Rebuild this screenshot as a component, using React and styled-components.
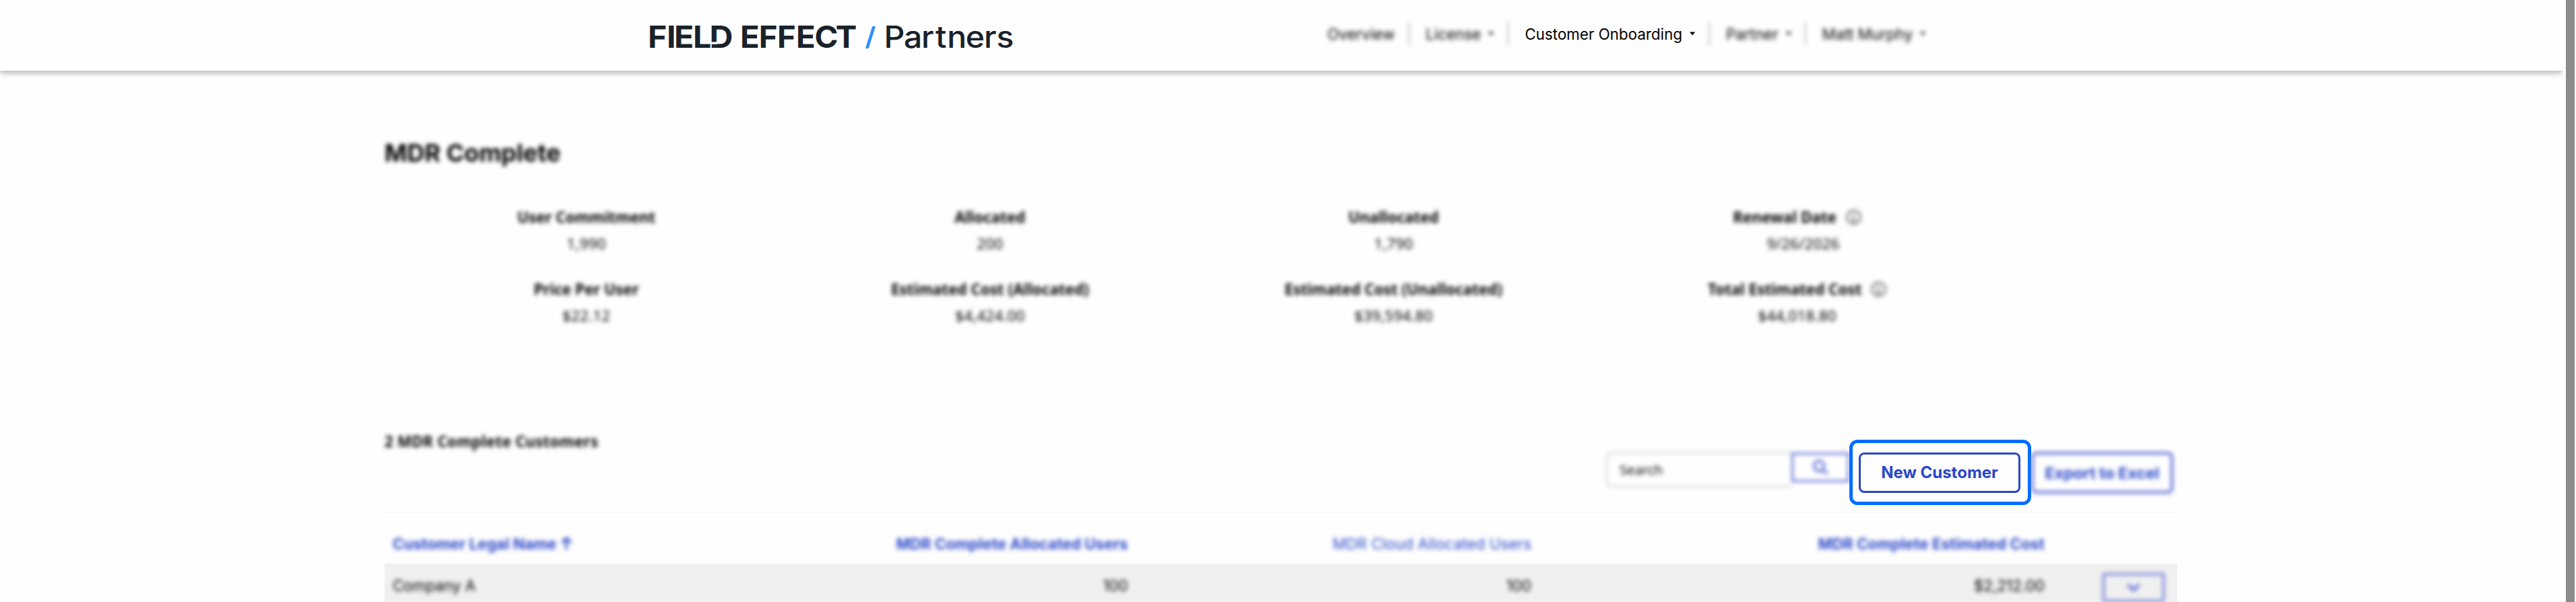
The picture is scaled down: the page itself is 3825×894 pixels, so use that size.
import React from 'react'
import styled, { createGlobalStyle, css } from 'styled-components'

const stats = [
  { label: 'User Commitment', value: '1,990' },
  { label: 'Allocated', value: '200' },
  { label: 'Unallocated', value: '1,790' },
  { label: 'Renewal Date', value: '9/26/2026', info: true, shift: true },
  { label: 'Price Per User', value: '$22.12' },
  { label: 'Estimated Cost (Allocated)', value: '$4,424.00' },
  { label: 'Estimated Cost (Unallocated)', value: '$39,594.80' },
  { label: 'Total Estimated Cost', value: '$44,018.80', info: true },
]

const customers = [
  { name: 'Company A', complete: '100', cloud: '100', cost: '$2,212.00' },
]

// glyph offsets and horizontal stretch for each word of the wordmark
const wordmark = [
  { text: 'FIELD', weight: 650, stretch: 1.08, at: [-3, 25, 36, 64, 88.6] },
  { text: 'EFFECT', weight: 650, stretch: 1.06, at: [134, 161.8, 189, 217, 244.4, 275.8] },
  { text: 'Partners', weight: 500, stretch: 1.08, at: [347.4, 377, 403, 424, 441.2, 468.7, 496, 514.4] },
]

function Logo () {
  return (
    <LogoSvg viewBox="0 0 544 40">
      {wordmark.map(({ text, weight, stretch, at }) => (
        <LogoText
          key={text}
          weight={weight}
          transform={`scale(${stretch} 1)`}
          x={at.map((x) => (x / stretch).toFixed(2)).join(' ')}
          y="35.2"
        >
          {text}
        </LogoText>
      ))}
      <rect x="90.5" y="26.3" width="9.4" height="3.4" fill="#fefefe" />
      <rect x="0" y="3" width="4.8" height="33" fill="#2e90ff" transform="translate(331.3 0) skewX(-17.5)" />
    </LogoSvg>
  )
}

function Caret () {
  return (
    <svg width="8" height="6" viewBox="0 0 8 6">
      <path d="M0 0.5h8L4 5.5z" fill="currentColor" />
    </svg>
  )
}

function InfoIcon () {
  return (
    <svg width="23" height="23" viewBox="0 0 23 23" fill="none" stroke="#555" strokeWidth="2">
      <circle cx="11.5" cy="11.5" r="10" />
      <path d="M9.5 10h2v7M8.8 17h5.4M11 5.6v2" />
    </svg>
  )
}

function SearchIcon () {
  return (
    <svg width="24" height="24" viewBox="0 0 24 24" fill="none" stroke="currentColor" strokeWidth="3.5">
      <circle cx="10" cy="10" r="7.5" />
      <path d="M15.5 15.5l7 7" />
    </svg>
  )
}

function Chevron () {
  return (
    <svg width="20" height="13" viewBox="0 0 20 13" fill="none" stroke="currentColor" strokeWidth="4">
      <path d="M1.5 2L10 10.5 18.5 2" />
    </svg>
  )
}

function ArrowUp () {
  return (
    <svg width="18" height="20" viewBox="0 0 18 20" fill="none" stroke="currentColor" strokeWidth="3">
      <path d="M9 19.5V2M2 9l7-7 7 7" />
    </svg>
  )
}

export default function App () {
  return (
    <Screen>
      <GlobalStyle />
      <Page>
        <Header>
          <Logo />
          <Nav>
            <NavItem muted>Overview</NavItem>
            <NavItem muted>License<Caret /></NavItem>
            <NavItem>Customer Onboarding<Caret /></NavItem>
            <NavItem muted>Partner<Caret /></NavItem>
            <NavItem muted>Matt Murphy<Caret /></NavItem>
          </Nav>
        </Header>
        <Main>
          <Title>MDR Complete</Title>
          <Stats>
            {stats.map((stat) => (
              <Stat key={stat.label}>
                <StatLabel>
                  {stat.label}
                  {stat.info && <InfoIcon />}
                </StatLabel>
                <StatValue shift={stat.shift}>{stat.value}</StatValue>
              </Stat>
            ))}
          </Stats>
          <Toolbar>
            <Count>2 MDR Complete Customers</Count>
            <Actions>
              <SearchBox>Search</SearchBox>
              <SearchButton><SearchIcon /></SearchButton>
              <Highlight>
                <NewCustomer>New Customer</NewCustomer>
              </Highlight>
              <Export>Export to Excel</Export>
            </Actions>
          </Toolbar>
          <Table>
            <HeadRow>
              <Cell>Customer Legal Name<ArrowUp /></Cell>
              <Cell right>MDR Complete Allocated Users</Cell>
              <Cell right light>MDR Cloud Allocated Users</Cell>
              <Cell right>MDR Complete Estimated Cost</Cell>
            </HeadRow>
            {customers.map((customer) => (
              <Row key={customer.name}>
                <Cell>{customer.name}</Cell>
                <Cell right>{customer.complete}</Cell>
                <Cell right>{customer.cloud}</Cell>
                <Cell right>{customer.cost}</Cell>
                <Expand><Chevron /></Expand>
              </Row>
            ))}
          </Table>
        </Main>
      </Page>
      <Scrollbar><Thumb /></Scrollbar>
    </Screen>
  )
}

const GlobalStyle = createGlobalStyle`
  body {
    margin: 0;
    background: #fefefe;
  }
  * {
    box-sizing: border-box;
  }
`

const noForward = (...names) => ({ shouldForwardProp: (prop) => !names.includes(prop) })

const blurred = css`
  filter: blur(3.2px);
`

const Screen = styled.div`
  display: flex;
  width: 3825px;
  height: 894px;
  overflow: hidden;
  font-family: Inter, sans-serif;
  font-size: 22.4px;
  color: #000;
  background: #fefefe;
`

const Page = styled.div`
  width: 3805px;
  overflow: hidden;
`

const Scrollbar = styled.div`
  width: 20px;
  padding: 0 2px 0 5px;
  background: #fcfcfc;
`

const Thumb = styled.div`
  height: 100%;
  background: #8b8b8b;
`

const Header = styled.header`
  display: flex;
  height: 105px;
  padding-left: 965px;
  background: #fefefe;
  box-shadow: 0 4px 8px rgba(0, 0, 0, 0.27);
`

const LogoSvg = styled.svg`
  width: 544px;
  height: 40px;
  margin-top: 36px;
  overflow: visible;
`

const LogoText = styled.text.withConfig(noForward('weight'))`
  font-family: Inter, sans-serif;
  font-size: 44.7px;
  font-weight: ${(props) => props.weight};
  fill: #19222b;
`

const Nav = styled.nav`
  display: flex;
  height: 36px;
  margin: 32px 0 0 462px;
`

const NavItem = styled.div.withConfig(noForward('muted'))`
  display: flex;
  align-items: center;
  gap: 11px;
  height: 36px;
  padding-right: 20px;
  white-space: nowrap;
  ${(props) => props.muted && blurred}

  & + & {
    padding-left: 23px;
  }

  &:not(:last-child)::after {
    content: '';
    width: 2px;
    height: 36px;
    margin-left: 9px;
    margin-right: -19px;
    background: #bbb;
    filter: blur(${(props) => props.muted ? 0 : 3.2}px);
  }
`

const Main = styled.main`
  width: 2662px;
  margin-left: 571px;
`

const Title = styled.h1`
  margin: 0;
  padding-top: 100px;
  font-size: 36px;
  font-weight: 700;
  line-height: 44px;
  ${blurred}
`

const Stats = styled.section`
  display: grid;
  grid-template-columns: repeat(4, 599.3px);
  row-gap: 29px;
  margin-top: 54px;
  font-family: 'Noto Sans', sans-serif;
  line-height: 39px;
  ${blurred}
`

const Stat = styled.div`
  display: flex;
  flex-direction: column;
  align-items: center;
`

const StatLabel = styled.div`
  display: flex;
  align-items: center;
  gap: 14px;
  font-weight: 700;
`

const StatValue = styled.div.withConfig(noForward('shift'))`
  padding-left: ${(props) => props.shift ? 18 : 0}px;
  letter-spacing: 0.2px;
`

const Toolbar = styled.section`
  display: flex;
  justify-content: space-between;
  height: 107px;
  margin-top: 165px;
`

const Count = styled.div`
  margin-top: -7px;
  font-family: 'Noto Sans', sans-serif;
  font-weight: 700;
  line-height: 20px;
  letter-spacing: 0.3px;
  ${blurred}
`

const Actions = styled.div`
  display: flex;
  align-items: flex-start;
  padding-right: 6px;
`

const SearchBox = styled.div`
  width: 275px;
  height: 53px;
  margin-top: 18px;
  padding-left: 17px;
  border: 3px solid #dedede;
  border-right: 0;
  border-radius: 6px 0 0 6px;
  font-family: 'Noto Sans', sans-serif;
  font-size: 20.2px;
  line-height: 47px;
  ${blurred}
`

const SearchButton = styled.div`
  display: flex;
  align-items: center;
  justify-content: center;
  width: 86px;
  height: 44px;
  margin-top: 19px;
  border: 3px solid #6473d8;
  color: #6473d8;
  ${blurred}
`

const Highlight = styled.div`
  width: 270px;
  height: 97px;
  padding: 14px 11px 0 9px;
  border: 5px solid #006eff;
  border-radius: 12px;
  background: #fefefe;
  position: relative;
`

const NewCustomer = styled.div`
  height: 60px;
  border: 3px solid #2a46c8;
  border-radius: 8px;
  color: #2a46c8;
  font-size: 24px;
  font-weight: 650;
  line-height: 53px;
  text-align: center;
`

const Export = styled.div`
  width: 211px;
  height: 62px;
  margin-top: 18px;
  border: 4px solid #6473d8;
  border-radius: 8px;
  color: #2a46c8;
  font-size: 23.3px;
  font-weight: 700;
  line-height: 56px;
  text-align: center;
  ${blurred}
`

const Table = styled.div`
  border-top: 2px solid #f8f8f8;
`

const HeadRow = styled.div`
  display: grid;
  grid-template-columns: 552px 540px 599px 762px;
  height: 75px;
  padding: 15px 0 0 12px;
  color: #2a46c8;
  font-weight: 700;
  letter-spacing: 0.1px;
  align-items: center;
`

const Row = styled.div`
  display: grid;
  grid-template-columns: 552px 540px 599px 762px 1fr;
  height: 64px;
  padding-left: 12px;
  background: #f0f0f0;
  align-items: center;
`

const Cell = styled.div.withConfig(noForward('right', 'light'))`
  display: flex;
  align-items: center;
  justify-content: ${(props) => props.right ? 'flex-end' : 'flex-start'};
  gap: 6px;
  font-weight: ${(props) => props.light ? 400 : 'inherit'};
  ${blurred}
`

const Expand = styled.div`
  display: flex;
  align-items: center;
  justify-content: center;
  width: 92px;
  height: 43px;
  margin: 6px 0 0 86px;
  border: 3px solid #6473d8;
  border-radius: 3px;
  color: #6473d8;
  ${blurred}
`
